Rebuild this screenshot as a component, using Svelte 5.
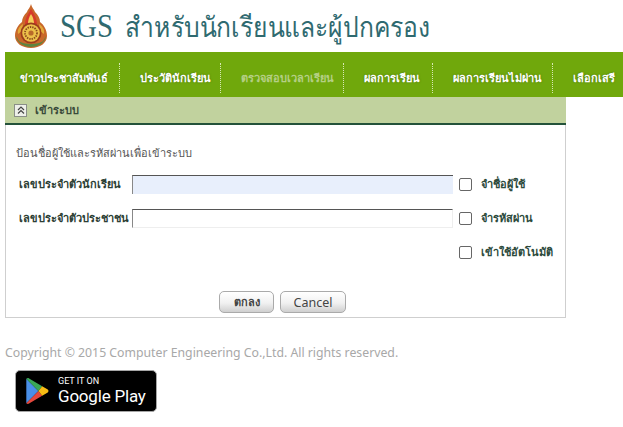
<script>
  const menu = [
    { label: 'ข่าวประชาสัมพันธ์', w: 115 },
    { label: 'ประวัตินักเรียน', w: 101 },
    { label: 'ตรวจสอบเวลาเรียน', w: 123, muted: true },
    { label: 'ผลการเรียน', w: 89 },
    { label: 'ผลการเรียนไม่ผ่าน', w: 120 },
    { label: 'เลือกเสรี', w: 70 }
  ];
</script>

<div class="page">
  <header class="brand">
    <svg class="logo" viewBox="0 0 32 44" width="32" height="44">
      <path d="M16 0 C17 4 19 5 20 8 C23 11 25 14 25 18 C29 21 32 26 32 32 C32 39 25 44 16 44 C7 44 0 39 0 32 C0 26 3 21 7 18 C7 14 9 11 12 8 C13 5 15 4 16 0Z" fill="#c9682a"/>
      <path d="M16 5 C19 10 22 14 22 21 L10 21 C10 14 13 10 16 5Z" fill="#d63a2a"/>
      <path d="M16 10 C18 13 19 16 19 20 L13 20 C13 16 14 13 16 10Z" fill="#f3cf58"/>
      <path d="M1 32 C2 39 9 43 16 43 C23 43 30 39 31 32 L28 37 C24 41 8 41 4 37Z" fill="#5d8440"/>
      <path d="M3 30 C2 25 5 22 8 20 L7 27Z M29 30 C30 25 27 22 24 20 L25 27Z" fill="#e2a93a"/>
      <circle cx="16" cy="29" r="10.5" fill="#9c3d1c"/>
      <circle cx="16" cy="29" r="8.8" fill="#ecc04a"/>
      <circle cx="16" cy="29" r="6" fill="none" stroke="#8a4a1c" stroke-width="1.8" stroke-dasharray="1.4 1"/>
      <circle cx="16" cy="29" r="2.6" fill="#b8692a"/>
    </svg>
    <h1><span class="sgs">SGS</span><span class="th">สำหรับนักเรียนและผู้ปกครอง</span></h1>
  </header>

  <nav class="menu">
    {#each menu as item}
      <a href="#top" class="item" class:muted={item.muted} style="width:{item.w}px">{item.label}</a>
    {/each}
  </nav>

  <section class="panel">
    <div class="panel-head">
      <span class="collapse">
        <svg viewBox="0 0 10 10" width="10" height="10">
          <path d="M2 5 L5 2 L8 5 M2 8.5 L5 5.5 L8 8.5" fill="none" stroke="#444" stroke-width="1.2"/>
        </svg>
      </span>
      <span>เข้าระบบ</span>
    </div>

    <div class="panel-body">
      <p class="hint">ป้อนชื่อผู้ใช้และรหัสผ่านเพื่อเข้าระบบ</p>

      <div class="row">
        <label for="student">เลขประจำตัวนักเรียน</label>
        <input id="student" class="filled" type="text" />
        <input class="check" type="checkbox" id="rememberUser" />
        <label class="check-label" for="rememberUser">จำชื่อผู้ใช้</label>
      </div>
      <div class="row">
        <label for="citizen">เลขประจำตัวประชาชน</label>
        <input id="citizen" type="password" />
        <input class="check" type="checkbox" id="rememberPass" />
        <label class="check-label" for="rememberPass">จำรหัสผ่าน</label>
      </div>
      <div class="row">
        <span class="spacer"></span>
        <input class="check" type="checkbox" id="auto" />
        <label class="check-label" for="auto">เข้าใช้อัตโนมัติ</label>
      </div>

      <div class="actions">
        <button type="button" class="ok">ตกลง</button>
        <button type="button" class="cancel">Cancel</button>
      </div>
    </div>
  </section>

  <footer class="foot">
    <p>Copyright © 2015 Computer Engineering Co.,Ltd. All rights reserved.</p>
    <a class="play" href="#top">
      <svg viewBox="0 0 26 30" width="25" height="28">
        <path d="M1 2 L1 28 L14 15Z" fill="#4a8fe8"/>
        <path d="M1 2 C2 1 3 1 4 1.6 L18 10 L14 15Z" fill="#3aa757"/>
        <path d="M1 28 C2 29 3 29 4 28.4 L18 20 L14 15Z" fill="#e5483d"/>
        <path d="M18 10 L24 13.5 C25 14.4 25 15.6 24 16.5 L18 20 L14 15Z" fill="#f9bc15"/>
      </svg>
      <span class="play-text">
        <small>GET IT ON</small>
        <span class="store">Google Play</span>
      </span>
    </a>
  </footer>
</div>

<style>
  :global(body) {
    background: #fff;
    overflow: hidden;
  }
  .page {
    width: 623px;
    height: 427px;
    overflow: hidden;
    font-family: "Noto Sans", Tahoma, sans-serif;
    font-size: 11px;
  }
  .brand {
    height: 52px;
    display: flex;
    align-items: center;
    padding-left: 15px;
    gap: 13px;
  }
  .logo {
    flex: none;
  }
  h1 {
    margin: 2px 0 0;
    font-family: "Liberation Serif", "Noto Sans", serif;
    font-weight: 300;
    color: #2f6a70;
    white-space: nowrap;
    display: flex;
    align-items: baseline;
    gap: 14px;
    transform: scaleX(0.875);
    transform-origin: left;
  }
  .sgs {
    font-size: 33px;
  }
  .th {
    font-size: 28.2px;
  }
  .menu {
    margin-left: 5px;
    height: 45px;
    padding-top: 7px;
    box-sizing: border-box;
    background: #70a80c;
    display: flex;
    align-items: center;
  }
  .item {
    flex: none;
    height: 30px;
    line-height: 30px;
    padding-left: 20px;
    color: #fff;
    font-weight: 700;
    font-size: 11px;
    text-decoration: none;
    border-right: 1px dotted #d7e8b4;
    box-sizing: border-box;
    white-space: nowrap;
    text-shadow: 0 0 2px rgba(40, 70, 0, 0.55);
  }
  .item:first-child {
    padding-left: 15px;
  }
  .item:last-child {
    border-right: 0;
  }
  .muted {
    color: #b5cf85;
    text-shadow: none;
  }
  .panel {
    margin-left: 5px;
    width: 561px;
    box-sizing: border-box;
  }
  .panel-head {
    height: 28px;
    box-sizing: border-box;
    background: #c1d29e;
    border-bottom: 2px solid #24523a;
    display: flex;
    align-items: center;
    gap: 8px;
    padding-left: 9px;
    font-weight: 700;
    color: #3a4a3a;
  }
  .collapse {
    width: 11px;
    height: 11px;
    background: #eef0ea;
    border: 1px solid #8a8f88;
    display: flex;
    align-items: center;
    justify-content: center;
  }
  .panel-body {
    height: 193px;
    box-sizing: border-box;
    border: 1px solid #cfcfcf;
    border-top: 0;
    padding: 20px 0 0 10px;
    position: relative;
  }
  .hint {
    margin: 0 0 13px;
    color: #555;
    font-size: 11px;
    line-height: 16px;
  }
  .row {
    display: flex;
    align-items: center;
    height: 20px;
    margin-bottom: 14px;
  }
  .row > label:first-child {
    width: 116px;
    padding-left: 3px;
    box-sizing: border-box;
    font-weight: 700;
    color: #2c3e34;
    white-space: nowrap;
  }
  input[type="text"],
  input[type="password"] {
    width: 321px;
    height: 19px;
    box-sizing: border-box;
    border: 0;
    border-top: 1px solid #555;
    border-left: 1px solid #888;
    border-bottom: 1px solid #eee;
    border-right: 1px solid #eee;
    padding: 0;
    margin: 0;
    background: #fff;
  }
  .spacer {
    flex: none;
    width: 437px;
  }
  input.filled {
    background: #e8effc;
    border-bottom: 0;
    border-right: 0;
  }
  .check {
    appearance: none;
    width: 13px;
    height: 13px;
    margin: 0 0 0 6px;
    border: 1px solid #666;
    border-radius: 2px;
    background: #fff;
  }
  .check-label {
    margin-left: 9px;
    font-weight: 700;
    color: #2c4a3c;
    white-space: nowrap;
  }
  .actions {
    position: absolute;
    left: 213px;
    top: 166px;
    display: flex;
    gap: 6px;
  }
  button {
    height: 22px;
    padding: 0;
    width: 55px;
    border: 1px solid #aaa;
    border-radius: 5px;
    background: linear-gradient(#fff, #f1f1f1 55%, #cfcfcf);
    font: 12.5px "Noto Sans", sans-serif;
    color: #444;
  }
  .ok {
    font-weight: 700;
    font-size: 11px;
  }
  .cancel {
    width: 66px;
  }
  .foot {
    padding: 26px 0 0 5px;
  }
  .foot p {
    margin: 0;
    color: #a8a8a8;
    font-family: "Noto Sans", sans-serif;
    font-size: 12.27px;
    line-height: 18px;
  }
  .play {
    margin: 8px 0 0 10px;
    width: 142px;
    height: 42px;
    box-sizing: border-box;
    background: #000;
    border: 1px solid #a6a6a6;
    border-radius: 5px;
    display: flex;
    align-items: center;
    gap: 8px;
    padding-left: 9px;
    color: #fff;
    text-decoration: none;
  }
  .play-text {
    display: flex;
    flex-direction: column;
    white-space: nowrap;
    line-height: 1;
  }
  .play small {
    font: 400 9px/10px Roboto, sans-serif;
  }
  .store {
    font: 400 17px/20px Roboto, sans-serif;
    letter-spacing: -0.2px;
  }
</style>
